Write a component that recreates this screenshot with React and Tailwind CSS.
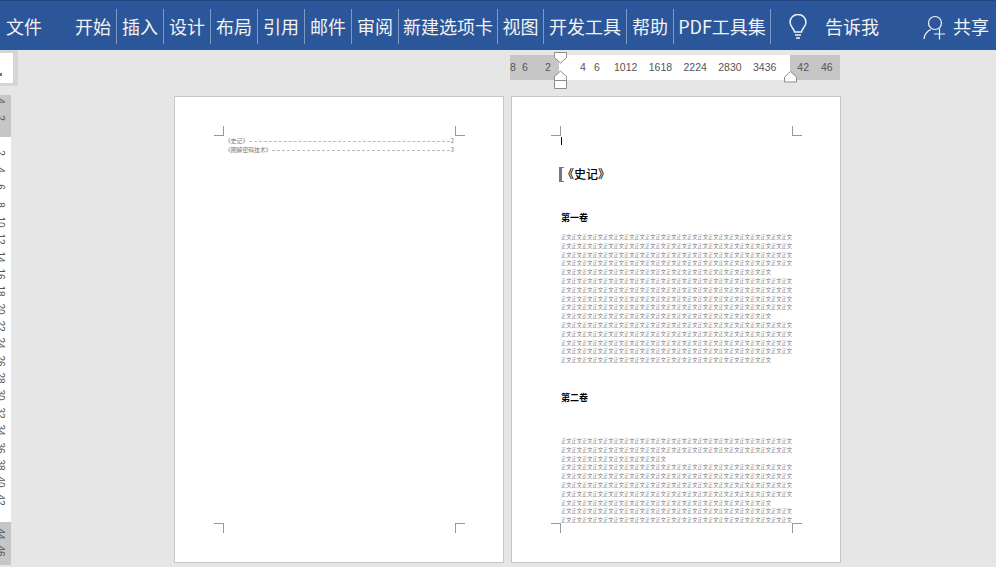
const font = "font-['Microsoft_YaHei','Noto_Sans_CJK_SC','Noto_Sans',sans-serif]";

const tabs = [
  { label: "开始", width: "w-[47px]" },
  { label: "插入", width: "w-[47px]" },
  { label: "设计", width: "w-[47px]" },
  { label: "布局", width: "w-[47px]" },
  { label: "引用", width: "w-[47px]" },
  { label: "邮件", width: "w-[47px]" },
  { label: "审阅", width: "w-[47px]" },
  { label: "新建选项卡", width: "w-[99px]" },
  { label: "视图", width: "w-[46px]" },
  { label: "开发工具", width: "w-[83px]" },
  { label: "帮助", width: "w-[47px]" },
  { label: "PDF工具集", width: "w-[97px]" },
];

const hNumbers = ["1012", "1618", "2224", "2830", "3436"];
const vNumbers = ["2", "4", "6", "8", "10", "12", "14", "16", "18", "20", "22", "24", "26", "28", "30", "32", "34", "36", "38", "40", "42"];

function CropMarks() {
  return (
    <>
      <div className="absolute top-[29px] left-[39px] h-[10px] w-[10px] border-r border-b border-[#999]" />
      <div className="absolute top-[29px] left-[280px] h-[10px] w-[10px] border-l border-b border-[#999]" />
      <div className="absolute top-[426px] left-[39px] h-[10px] w-[10px] border-t border-r border-[#999]" />
      <div className="absolute top-[426px] left-[280px] h-[10px] w-[10px] border-t border-l border-[#999]" />
    </>
  );
}

function Body({ count }) {
  return (
    <p className="w-[231px] text-[5.25px] leading-[8.8px] break-all text-[#777]">
      {"正文".repeat(count)}
    </p>
  );
}

function Page({ children }) {
  return (
    <div className="relative h-[467px] w-[330px] overflow-hidden border border-[#c6c6c6] bg-white">
      <CropMarks />
      {children}
    </div>
  );
}

function RulerNumber({ value }) {
  return (
    <div className="flex h-[17.35px] items-center justify-center overflow-hidden">
      <span className="-translate-x-[6px] rotate-90 leading-none">{value}</span>
    </div>
  );
}

export default function App() {
  return (
    <div className={`flex h-[567px] w-[996px] flex-col overflow-hidden bg-[#e6e6e6] ${font}`}>
      <header className="flex h-[50px] items-center border-t border-[#24477f] bg-[#2b579a] pt-[2px] text-[18px] text-[#f2f2f2]">
        <div className="w-[70px] pl-[6px]">文件</div>
        {tabs.map((tab) => (
          <div
            key={tab.label}
            className={`flex h-[35px] items-center justify-center border-r border-[#7f9bc4] ${tab.width}`}
          >
            {tab.label}
          </div>
        ))}
        <svg className="ml-[17px] shrink-0" width="20" height="26" viewBox="0 0 20 26" fill="none" stroke="#f2f2f2" strokeWidth="1.5">
          <path d="M6.5 18c0-3-4.500-5-4.500-10a8 7.500 0 0 1 16 0c0 5-4.500 7-4.500 10z" />
          <path d="M7 21h6M8 24h4" />
        </svg>
        <div className="ml-[17px] w-[98px]">告诉我</div>
        <svg className="shrink-0" width="24" height="28" viewBox="0 0 24 28" fill="none" stroke="#f2f2f2" strokeWidth="1.2">
          <circle cx="12" cy="10" r="6.500" />
          <path d="M1 26c0-4 3-8 7-9.500M11 21h11M16.500 15.500v11" />
        </svg>
        <div className="ml-[6px]">共享</div>
      </header>

      <div className="relative flex-1">
        {/* vertical ruler */}
        <div className="absolute top-0 left-0 h-[36px] w-[18px] border-y-[3px] border-r-[5px] border-[#d6d6d6] bg-white">
          <div className="absolute top-[20px] left-0 h-[3px] w-[2px] bg-[#777]" />
        </div>
        <div className="absolute top-[45px] left-0 flex h-[470px] w-[11px] flex-col bg-white font-['Liberation_Sans',sans-serif] text-[10px] text-[#555]">
          <div className="h-[42px] overflow-hidden bg-[#c6c6c6]">
            <div className="-mt-[3px]">
              <RulerNumber value="4" />
              <RulerNumber value="2" />
            </div>
          </div>
          <div className="flex-1 overflow-hidden pt-[7px]">
            {vNumbers.map((n) => (
              <RulerNumber key={n} value={n} />
            ))}
          </div>
          <div className="h-[43px] bg-[#c6c6c6] pt-[3px]">
            <RulerNumber value="44" />
            <RulerNumber value="46" />
          </div>
        </div>

        {/* horizontal ruler */}
        <div className="ml-[510px] flex h-[46px] items-start pt-[5px]">
          <div className="relative flex h-[25px] w-[330px] items-center bg-white font-['Liberation_Sans',sans-serif] text-[10.500px] text-[#555]">
            <div className="flex h-full w-[49px] items-center bg-[#c6c6c6]">
              <span className="w-[12px]">8</span>
              <span className="w-[23px]">6</span>
              <span>2</span>
            </div>
            <div className="ml-[21px] flex whitespace-nowrap">
              <span className="w-[14px]">4</span>
              <span className="w-[20px]">6</span>
              {hNumbers.map((n) => (
                <span key={n} className="w-[34.75px]">{n}</span>
              ))}
            </div>
            <div className="absolute top-0 right-0 flex h-full w-[50px] items-center justify-center gap-[12px] bg-[#c6c6c6]">
              <span>42</span>
              <span>46</span>
            </div>
            <svg className="absolute top-[-3px] left-[44px]" width="13" height="37" viewBox="0 0 13 37" fill="#fff" stroke="#8c8c8c">
              <path d="M.5.500h12v5l-6 5.500-6-5.500z" />
              <path d="M.5 24.500l6-5.500 6 5.500v4h-12z" />
              <path d="M.5 28.500h12v8h-12z" />
            </svg>
            <svg className="absolute top-[16px] left-[274px]" width="13" height="12" viewBox="0 0 13 12" fill="#fff" stroke="#8c8c8c">
              <path d="M.5 6l6-5.500 6 5.500v5h-12z" />
            </svg>
          </div>
        </div>

        {/* pages */}
        <div className="ml-[174px] flex gap-[7px]">
          <Page>
            <div className="flex flex-col gap-[2px] pt-[40px] pl-[50px] text-[5.800px] leading-[7px] text-[#777]">
              <div className="flex w-[229px] items-end">
                <span>《史记》</span>
                <span className="mx-[1px] mb-[2px] flex-1 border-b border-dashed border-[#bbb]" />
                <span>2</span>
              </div>
              <div className="flex w-[229px] items-end">
                <span>《图解密码技术》</span>
                <span className="mx-[1px] mb-[2px] flex-1 border-b border-dashed border-[#bbb]" />
                <span>3</span>
              </div>
            </div>
          </Page>
          <Page>
            <div className="absolute top-[40px] left-[49px] h-[8px] w-px bg-black" />
            <div className="absolute top-[70px] left-[47px] h-[15px] w-[5px] border-y border-l-[3px] border-[#777]" />
            <div className="flex flex-col pt-[69px] pl-[49px] text-black">
              <h1 className="ml-[1px] h-[16px] text-[12px] leading-[16px] font-medium">《史记》</h1>
              <h2 className="mt-[29px] h-[14px] text-[9px] leading-[14px] font-bold">第一卷</h2>
              <div className="mt-[8px] flex flex-col">
                <Body count={108} />
                <Body count={108} />
                <Body count={108} />
              </div>
              <h2 className="mt-[26px] h-[14px] text-[9px] leading-[14px] font-bold">第二卷</h2>
              <div className="mt-[32px] flex flex-col">
                <Body count={54} />
                <Body count={108} />
                <Body count={44} />
              </div>
            </div>
          </Page>
        </div>
      </div>
    </div>
  );
}
